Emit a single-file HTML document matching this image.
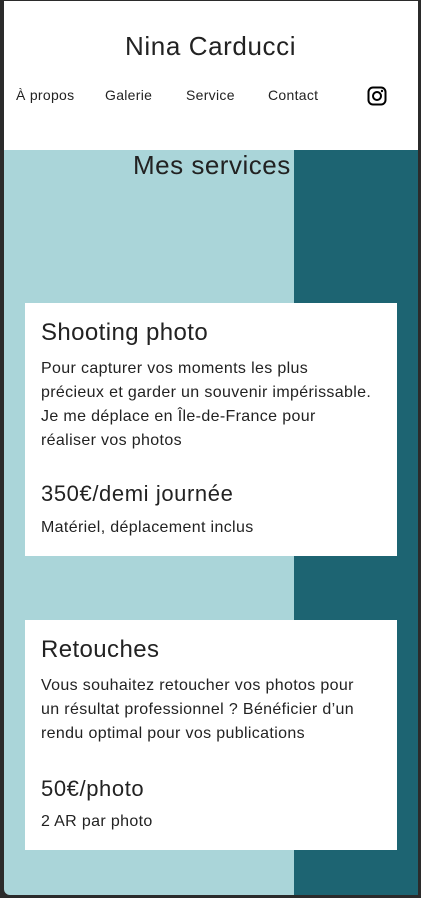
<!DOCTYPE html>
<html><head><style>
html,body{margin:0;padding:0;width:421px;height:898px;overflow:hidden;background:#2b2b2b;font-family:"Liberation Sans",sans-serif;color:#222;}
.page{position:absolute;left:4px;top:1px;width:414px;height:894px;background:#aad5d9;border-bottom-left-radius:6px;overflow:hidden;}
.header{position:absolute;left:0;top:0;width:414px;height:149px;background:#fff;}
.dark{position:absolute;left:290px;top:149px;width:124px;height:745px;background:#1d6472;}
.t{position:absolute;white-space:nowrap;}
.card{position:absolute;left:21px;width:372px;background:#fff;}
.b{font-size:16px;letter-spacing:0.35px;}
</style></head><body>
<div class="page">
<div class="header">
<div class="t" style="left:121px;top:30px;font-size:26px;letter-spacing:0.6px;">Nina Carducci</div>
<div class="t" style="left:12px;top:86px;font-size:14px;letter-spacing:0.3px;">À propos</div>
<div class="t" style="left:101px;top:86px;font-size:14px;letter-spacing:0.3px;">Galerie</div>
<div class="t" style="left:182px;top:86px;font-size:14px;letter-spacing:0.3px;">Service</div>
<div class="t" style="left:264px;top:86px;font-size:14px;letter-spacing:0.3px;">Contact</div>
<svg class="t" style="left:363px;top:85px" width="20" height="20" viewBox="0 0 20 20"><rect x="1.5" y="1.5" width="17" height="17" rx="4.5" fill="none" stroke="#000" stroke-width="2"/><circle cx="10" cy="10" r="4" fill="none" stroke="#000" stroke-width="2"/><circle cx="15" cy="5" r="1.2" fill="#000"/></svg>
</div>
<div class="dark"></div>
<div class="t" style="left:129px;top:149px;font-size:26px;letter-spacing:0.5px;">Mes services</div>
<div class="card" style="top:302px;height:253px;">
<div class="t" style="left:16px;top:16px;font-size:24px;letter-spacing:0.4px;">Shooting photo</div>
<div class="t b" style="left:16px;top:54px;line-height:24px;">Pour capturer vos moments les plus<br>précieux et garder un souvenir impérissable.<br>Je me déplace en Île-de-France pour<br>réaliser vos photos</div>
<div class="t" style="left:16px;top:178px;font-size:22px;letter-spacing:0.6px;">350€/demi journée</div>
<div class="t b" style="left:16px;top:216px;">Matériel, déplacement inclus</div>
</div>
<div class="card" style="top:619px;height:230px;">
<div class="t" style="left:16px;top:16px;font-size:24px;letter-spacing:0.4px;">Retouches</div>
<div class="t b" style="left:16px;top:54px;line-height:24px;">Vous souhaitez retoucher vos photos pour<br>un résultat professionnel ? Bénéficier d’un<br>rendu optimal pour vos publications</div>
<div class="t" style="left:16px;top:156px;font-size:22px;letter-spacing:0.6px;">50€/photo</div>
<div class="t b" style="left:16px;top:193px;">2 AR par photo</div>
</div>
</div>
</body></html>
